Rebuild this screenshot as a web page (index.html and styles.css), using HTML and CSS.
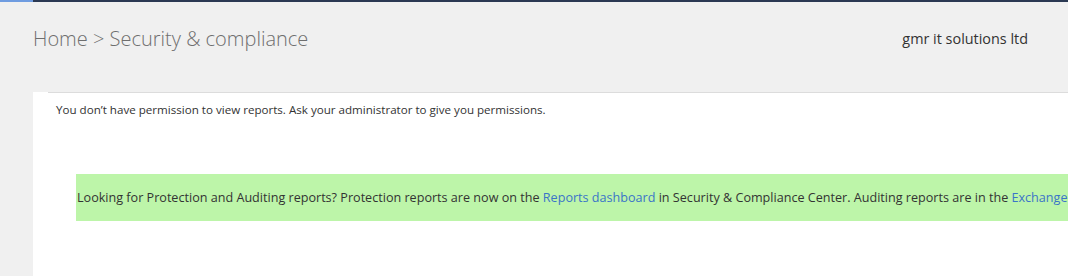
FILE: index.html
```html
<!DOCTYPE html>
<html lang="en">
  <head>
    <meta charset="UTF-8" />
    <meta name="viewport" content="width=device-width, initial-scale=1.0" />
    <title>Security &amp; compliance</title>
    <link rel="stylesheet" href="styles.css">
  </head>
  <body>
    <div class="top-bar"><span class="top-bar-active"></span></div>

    <div class="header">
      <div class="breadcrumb">Home &gt; Security &amp; compliance</div>
      <div class="org-name">gmr it solutions ltd</div>
    </div>

    <div class="panel">
      <div class="panel-inner">
        <p class="no-permission">
          You don’t have permission to view reports. Ask your administrator to give you permissions.
        </p>

        <div class="notice">
          Looking for Protection and Auditing reports? Protection reports are now on the
          <a href="#">Reports dashboard</a> in Security &amp; Compliance Center. Auditing reports are in the
          <a href="#">Exchange admin center</a>.
        </div>
      </div>
    </div>
  </body>
</html>
```

FILE: styles.css
```css
body {
  margin: 0;
  background-color: #f0f0f0;
  font-family: "Open Sans", "Noto Sans", sans-serif;
  color: #333;
  height: 276px;
  overflow: hidden;
}
.top-bar {
  height: 2px;
  background-color: #2b3953;
}
.top-bar-active {
  display: block;
  width: 33px;
  height: 2px;
  background-color: #6f9ce0;
}
.header {
  display: flex;
  justify-content: space-between;
  align-items: center;
  height: 72px;
  padding: 0 40px 0 33px;
}
.breadcrumb {
  font-size: 20px;
  font-weight: 300;
  color: #6e6e6e;
}
.org-name {
  font-size: 14.4px;
  color: #333;
}
.panel {
  margin: 18px 0 0 33px;
  padding-left: 15px;
  background-color: #fff;
  height: 184px;
  white-space: nowrap;
}
.panel-inner {
  border-top: 1px solid #dcdcdc;
}
.no-permission {
  margin: 0;
  padding: 9px 0 0 8px;
  font-size: 11.6px;
  color: #333;
}
.notice {
  margin: 57px 0 0 28px;
  padding: 0 0 0 1px;
  height: 47px;
  line-height: 47px;
  background-color: #bdf5a9;
  font-size: 12.6px;
  color: #333;
  overflow: hidden;
}
.notice a {
  color: #3a74c8;
  text-decoration: none;
}
```
